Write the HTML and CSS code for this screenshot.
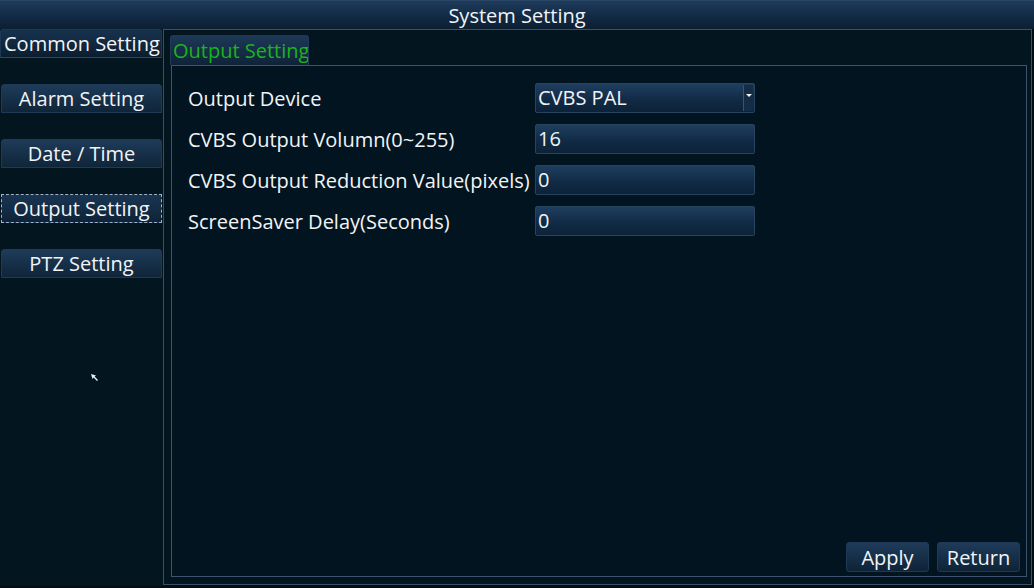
FILE: index.html
```
<!DOCTYPE html>
<html lang="en">
<head>
    <meta charset="UTF-8">
    <title>System Setting</title>
    <link rel="stylesheet" href="styles.css">
</head>
<body>
    <div class="screen">
        <div class="title-bar">System Setting</div>
        <div class="main">
            <div class="sidebar">
                <div class="side-btn current">Common Setting</div>
                <div class="side-btn">Alarm Setting</div>
                <div class="side-btn">Date / Time</div>
                <div class="side-btn focused">Output Setting</div>
                <div class="side-btn">PTZ Setting</div>
                <svg class="cursor" width="8" height="8" viewBox="0 0 8 8">
                    <path d="M0 0 L5 1.5 L3.6 2.6 L7 6 L6 7 L2.6 3.6 L1.5 5 Z" fill="#e8eef4"/>
                </svg>
            </div>
            <div class="panel">
                <div class="tabs">
                    <div class="tab">Output Setting</div>
                </div>
                <div class="page">
                    <div class="form">
                        <div class="row">
                            <span class="label">Output Device</span>
                            <div class="field select">CVBS PAL<span class="arrow"></span></div>
                        </div>
                        <div class="row">
                            <span class="label">CVBS Output Volumn(0~255)</span>
                            <div class="field">16</div>
                        </div>
                        <div class="row">
                            <span class="label">CVBS Output Reduction Value(pixels)</span>
                            <div class="field">0</div>
                        </div>
                        <div class="row">
                            <span class="label">ScreenSaver Delay(Seconds)</span>
                            <div class="field">0</div>
                        </div>
                    </div>
                    <div class="actions">
                        <div class="btn">Apply</div>
                        <div class="btn">Return</div>
                    </div>
                </div>
            </div>
        </div>
    </div>
</body>
</html>
```
FILE: styles.css
```
body {
    margin: 0;
    background: #000;
    font-family: "Open Sans", "Noto Sans", sans-serif;
    color: #f2f4f6;
}

.screen {
    width: 1034px;
    height: 588px;
    display: flex;
    flex-direction: column;
    background: #020c12;
}

.title-bar {
    height: 29px;
    line-height: 29px;
    text-align: center;
    font-size: 20px;
    background: linear-gradient(#1f3b5c, #112a44 55%, #0c1f33);
    border-top: 1px solid #2a4664;
    box-sizing: border-box;
}

.main {
    display: flex;
    height: 557px;
}

.sidebar {
    width: 162px;
    background: #031620;
    display: flex;
    flex-direction: column;
    gap: 26px;
    padding-right: 1px;
    position: relative;
}

.side-btn {
    height: 29px;
    line-height: 28px;
    text-align: center;
    font-size: 20px;
    margin: 0 0 0 1px;
    border: 1px solid #1f3a55;
    border-radius: 3px 3px 0 0;
    background: linear-gradient(#1e3b59, #0f2539);
    box-sizing: border-box;
    white-space: nowrap;
}

.side-btn.current {
    margin-left: 0;
    text-align: left;
    padding-left: 3px;
    border-color: #1d3852;
    border-bottom-color: #2a4866;
    background: linear-gradient(#17324e, #0b1e30);
}

.side-btn.focused {
    border: 1px dashed #9fb3c6;
    background: linear-gradient(#1a3552, #0e2338);
    border-radius: 0;
}

.cursor {
    position: absolute;
    left: 91px;
    top: 345px;
}

.panel {
    flex: 1;
    margin-right: 2px;
    margin-bottom: 1px;
    border: 1px solid #3a5068;
    background: #031620;
    display: flex;
    flex-direction: column;
    padding: 5px 4px 7px 6px;
}

.tabs {
    display: flex;
    height: 30px;
}

.tab {
    width: 139px;
    height: 30px;
    box-sizing: border-box;
    line-height: 30px;
    color: #1cb31c;
    font-size: 20px;
    padding-left: 2px;
    border: 1px solid #1f3a56;
    border-bottom: none;
    border-radius: 3px 3px 0 0;
    background: linear-gradient(#1c3856, #0f2439);
    white-space: nowrap;
    overflow: hidden;
}

.page {
    flex: 1;
    border: 1px solid #3c5470;
    margin-left: 1px;
    display: flex;
    flex-direction: column;
    justify-content: space-between;
    padding: 17px 6px 4px 16px;
    background: #021420;
}

.form {
    display: flex;
    flex-direction: column;
    gap: 11px;
}

.row {
    display: flex;
    align-items: center;
    height: 30px;
}

.label {
    width: 347px;
    font-size: 20px;
    white-space: nowrap;
}

.field {
    width: 220px;
    height: 30px;
    box-sizing: border-box;
    line-height: 28px;
    padding-left: 2px;
    font-size: 20px;
    border: 1px solid #27445f;
    border-radius: 2px;
    background: linear-gradient(#1f3e5f, #112b46 55%, #0d2238);
}

.select {
    position: relative;
}

.arrow {
    position: absolute;
    right: 1px;
    top: 1px;
    width: 9px;
    height: 26px;
    border-left: 1px solid #3a5570;
    background: #142c45;
}

.arrow::after {
    content: "";
    position: absolute;
    left: 2px;
    top: 9px;
    border-left: 3px solid transparent;
    border-right: 3px solid transparent;
    border-top: 3px solid #f0f4f8;
}

.actions {
    display: flex;
    justify-content: flex-end;
    gap: 8px;
}

.btn {
    width: 83px;
    height: 30px;
    box-sizing: border-box;
    line-height: 29px;
    text-align: center;
    font-size: 20px;
    border: 1px solid #1e3a55;
    border-radius: 3px;
    background: linear-gradient(#1e3b59, #0e2338);
}
```
